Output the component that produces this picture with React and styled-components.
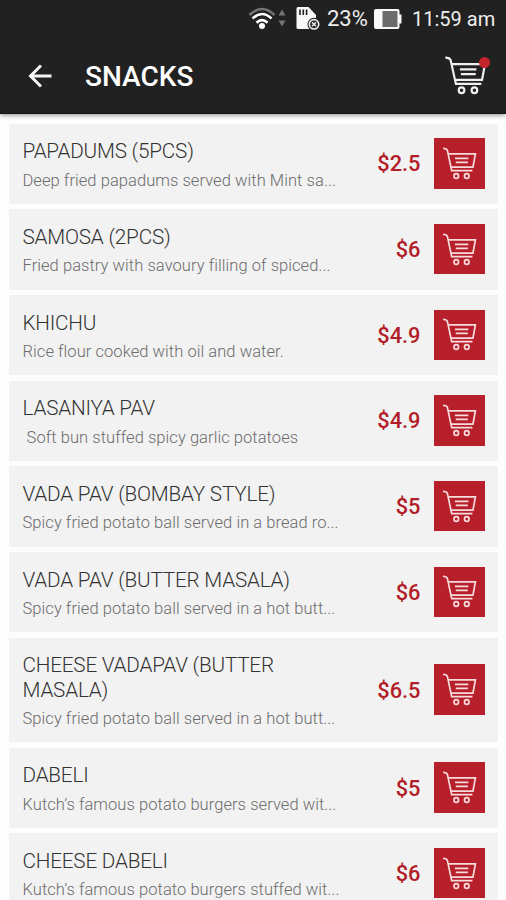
import React, { Fragment } from "react";
import styled, { createGlobalStyle } from "styled-components";

const items = [
  { name: "PAPADUMS (5PCS)", text: "Deep fried papadums served with Mint sa...", price: "$2.5" },
  { name: "SAMOSA (2PCS)", text: "Fried pastry with savoury filling of spiced...", price: "$6" },
  { name: "KHICHU", text: "Rice flour cooked with oil and water.", price: "$4.9" },
  { name: "LASANIYA PAV", text: " Soft bun stuffed spicy garlic potatoes", price: "$4.9" },
  { name: "VADA PAV (BOMBAY STYLE)", text: "Spicy fried potato ball served in a bread ro...", price: "$5" },
  { name: "VADA PAV (BUTTER MASALA)", text: "Spicy fried potato ball served in a hot butt...", price: "$6" },
  { name: "CHEESE VADAPAV (BUTTER MASALA)", text: "Spicy fried potato ball served in a hot butt...", price: "$6.5" },
  { name: "DABELI", text: "Kutch’s famous potato burgers served wit...", price: "$5" },
  { name: "CHEESE DABELI", text: "Kutch’s famous potato burgers stuffed wit...", price: "$6" }
];

const Cart = ({ width, height, color, stroke }) => (
  <svg
    width={width}
    height={height}
    viewBox="40 32 130 116"
    preserveAspectRatio="none"
    fill="none"
    stroke={color}
    strokeWidth={stroke}
  >
    <path d="M44 37 Q57 37 60 44 L76 115 H153" />
    <path d="M64 56 H164 L155 103 H74" />
    <path d="M88 72 H138 M91 86 H136" />
    <circle cx="93" cy="134" r="8.5" />
    <circle cx="132" cy="134" r="8.5" />
  </svg>
);

const WifiIcon = () => (
  <svg width="40" height="26" viewBox="0 0 40 26" fill="none" strokeWidth="2.6">
    <path d="M1.5 9 Q14 -3 26.500 9" stroke="#747474" />
    <path d="M4.500 12.500 Q14 3.500 23.500 12.500" stroke="#fff" />
    <path d="M8.500 16.800 Q14 11.500 19.500 16.800" stroke="#fff" />
    <circle cx="14" cy="20" r="3" fill="#fff" />
    <path d="M30.500 9.500 L34 3.500 L37.500 9.500 Z M30.500 14.500 L34 20.500 L37.500 14.500 Z" fill="#747474" />
  </svg>
);

const SimIcon = () => (
  <svg width="25" height="24" viewBox="0 0 25 24">
    <path d="M2 0 H12.500 L20 8 V22 H2 Q0.500 22 0.500 20.500 V1.500 Q0.500 0 2 0 Z" fill="#f8f8f8" />
    <path d="M4 2.500 V8 M7.300 2.500 V8 M10.600 2.500 V8" stroke="#212121" strokeWidth="1.6" />
    <circle cx="18" cy="17.300" r="6.500" fill="#212121" />
    <circle cx="18" cy="17.300" r="4.700" fill="none" stroke="#eee" strokeWidth="1.700" />
    <path d="M16 15.300 L20 19.300 M20 15.300 L16 19.300" stroke="#eee" strokeWidth="1.500" />
  </svg>
);

const BatteryIcon = () => (
  <svg width="28" height="20" viewBox="0 0 28 20">
    <rect x="1" y="1" width="23.500" height="18" rx="1" fill="#6b6b6b" stroke="#f8f8f8" strokeWidth="2" />
    <path d="M1 1 H8.500 V19 H1 Z M25 5.500 H27.500 V14.500 H25 Z" fill="#f8f8f8" />
  </svg>
);

const App = () => (
  <Fragment>
    <GlobalStyle />
    <Screen>
      <Header>
        <StatusBar>
          <WifiIcon />
          <SimIcon />
          <Battery>23%</Battery>
          <BatteryIcon />
          <Clock>11:59 am</Clock>
        </StatusBar>
        <Toolbar>
          <BackIcon viewBox="0 0 24 24">
            <path d="M13 1.500 L2.500 12 L13 22.500 M2.500 12 H23.500" />
          </BackIcon>
          <Title>SNACKS</Title>
          <HeaderCart>
            <Cart width={43} height={39} color="#f0f0f0" stroke={6.5} />
            <Dot />
          </HeaderCart>
        </Toolbar>
      </Header>
      <List>
        {items.map((item, idx) => (
          <Card key={idx}>
            <Info>
              <Name>{item.name}</Name>
              <Description>{item.text}</Description>
            </Info>
            <Price>{item.price}</Price>
            <AddButton>
              <Cart width={35} height={33} color="#f8dcdd" stroke={6.3} />
            </AddButton>
          </Card>
        ))}
      </List>
    </Screen>
  </Fragment>
);

export default App;

const GlobalStyle = createGlobalStyle`
  body {
    margin: 0;
    overflow: hidden;
    font-family: Roboto, sans-serif;
  }
  * {
    box-sizing: border-box;
  }
`;

const Screen = styled.div`
  height: 900px;
  overflow: hidden;
  background: #fdfdfd;
`;

const Header = styled.header`
  position: relative;
  height: 114px;
  background: #212121;
  color: #fff;
  border-bottom: 1px solid #111;
  box-shadow: 0 1px 5px rgba(0, 0, 0, 0.45);
`;

const StatusBar = styled.div`
  display: flex;
  align-items: center;
  height: 37px;
  padding-left: 248px;
  svg {
    flex: none;
  }
  svg:nth-of-type(2) {
    margin-left: 8px;
  }
`;

const Battery = styled.span`
  width: 47px;
  margin-left: 6px;
  color: #eee;
  font-size: 22px;
  white-space: nowrap;
`;

const Clock = styled.span`
  margin-left: 10px;
  padding-top: 1px;
  color: #eee;
  font-size: 20px;
  white-space: nowrap;
`;

const Toolbar = styled.div`
  display: flex;
  align-items: center;
  height: 76px;
  padding: 0 14px 0 28px;
`;

const BackIcon = styled.svg`
  width: 24px;
  height: 24px;
  margin-top: 1px;
  fill: none;
  stroke: #f5f5f5;
  stroke-width: 3;
`;

const Title = styled.h1`
  flex: 1;
  margin: 0 0 0 33px;
  padding-top: 3px;
  font-size: 28px;
  font-weight: 500;
  line-height: 32px;
`;

const HeaderCart = styled.div`
  position: relative;
  width: 48px;
  height: 39px;
`;

const Dot = styled.span`
  position: absolute;
  top: 1px;
  right: 2px;
  width: 11px;
  height: 11px;
  border-radius: 50%;
  background: #c4242b;
`;

const List = styled.main`
  display: flex;
  flex-direction: column;
  gap: 5.5px;
  padding: 9.7px 8px 0 9px;
`;

const Card = styled.article`
  display: flex;
  flex: none;
  align-items: center;
  min-height: 80.2px;
  padding: 12.6px 13.5px 13.3px;
  background: #f2f2f2;
`;

const Info = styled.div`
  width: 320px;
  padding-top: 3px;
`;

const Name = styled.h2`
  width: 280px;
  margin: 0;
  color: #333;
  font-size: 20.7px;
  font-weight: 300;
  letter-spacing: -0.2px;
  line-height: 24.3px;
`;

const Description = styled.p`
  margin: 7px 0 0;
  color: #6c6c6c;
  font-size: 16.5px;
  font-weight: 300;
  letter-spacing: 0.06px;
  line-height: 20px;
  white-space: pre;
`;

const Price = styled.span`
  flex: 1;
  padding: 1px 13.5px 0 0;
  color: #b21e28;
  font-size: 21.8px;
  font-weight: 500;
  text-align: right;
`;

const AddButton = styled.div`
  display: flex;
  flex: none;
  align-items: center;
  justify-content: center;
  width: 50.5px;
  height: 50.5px;
  background: #b71f2a;
`;
